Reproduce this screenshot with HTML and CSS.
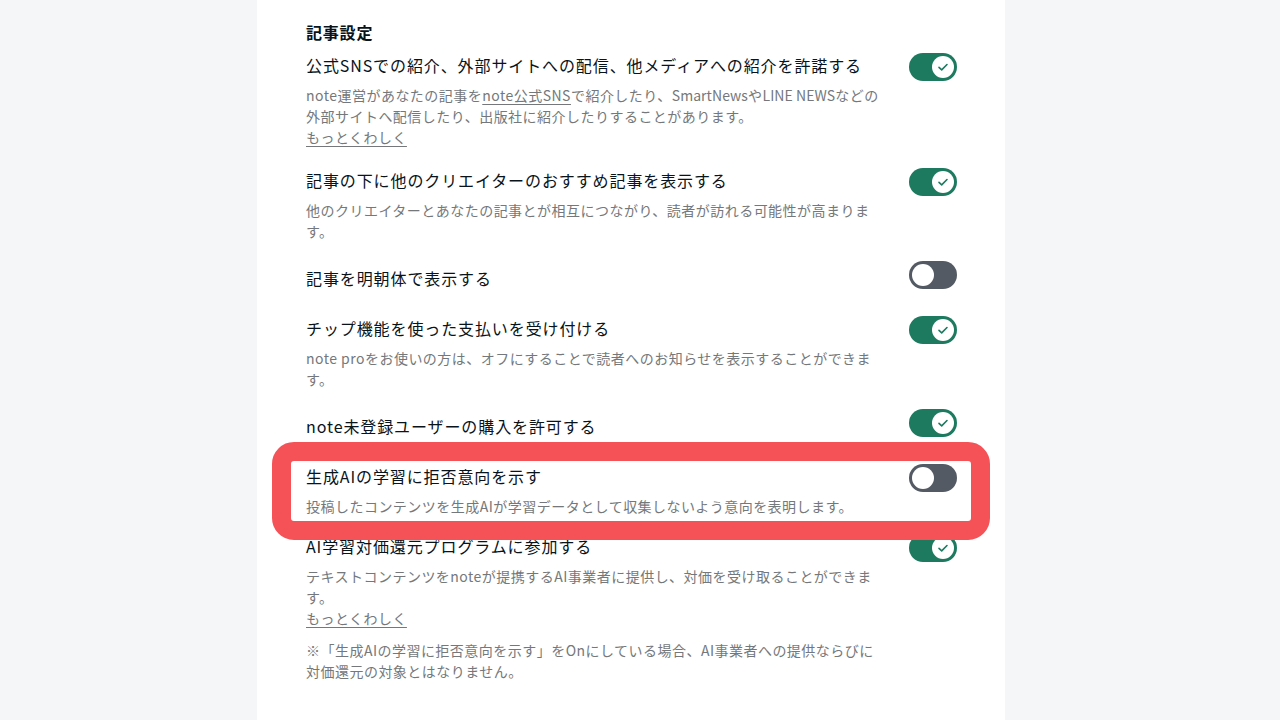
FILE: index.html
```html
<!DOCTYPE html>
<html lang="ja">
<head>
<meta charset="utf-8">
<title>記事設定</title>
<link rel="stylesheet" href="styles.css">
</head>
<body>
<div class="page">
  <section class="panel">
    <h2 class="heading">記事設定</h2>
    <div class="list">
      <div class="row row--link">
        <div class="text">
          <p class="title">公式SNSでの紹介、外部サイトへの配信、他メディアへの紹介を許諾する</p>
          <p class="desc">note運営があなたの記事を<a class="link" href="#">note公式SNS</a>で紹介したり、<span class="latin">SmartNews</span>や<span class="latin">LINE NEWS</span>などの外部サイトへ配信したり、出版社に紹介したりすることがあります。<br><a class="link" href="#">もっとくわしく</a></p>
        </div>
        <span class="toggle on"><span class="knob"><svg viewBox="0 0 22 22" width="22" height="22"><path d="M7 11.3l2.7 2.6 5.3-5.4" fill="none" stroke="#1d7a5f" stroke-width="1.6" stroke-linecap="round" stroke-linejoin="round"/></svg></span></span>
      </div>
      <div class="row">
        <div class="text">
          <p class="title">記事の下に他のクリエイターのおすすめ記事を表示する</p>
          <p class="desc">他のクリエイターとあなたの記事とが相互につながり、読者が訪れる可能性が高まります。</p>
        </div>
        <span class="toggle on"><span class="knob"><svg viewBox="0 0 22 22" width="22" height="22"><path d="M7 11.3l2.7 2.6 5.3-5.4" fill="none" stroke="#1d7a5f" stroke-width="1.6" stroke-linecap="round" stroke-linejoin="round"/></svg></span></span>
      </div>
      <div class="row row--single">
        <div class="text">
          <p class="title">記事を明朝体で表示する</p>
        </div>
        <span class="toggle off"><span class="knob"></span></span>
      </div>
      <div class="row">
        <div class="text">
          <p class="title">チップ機能を使った支払いを受け付ける</p>
          <p class="desc">note proをお使いの方は、オフにすることで読者へのお知らせを表示することができます。</p>
        </div>
        <span class="toggle on"><span class="knob"><svg viewBox="0 0 22 22" width="22" height="22"><path d="M7 11.3l2.7 2.6 5.3-5.4" fill="none" stroke="#1d7a5f" stroke-width="1.6" stroke-linecap="round" stroke-linejoin="round"/></svg></span></span>
      </div>
      <div class="row row--single">
        <div class="text">
          <p class="title">note未登録ユーザーの購入を許可する</p>
        </div>
        <span class="toggle on"><span class="knob"><svg viewBox="0 0 22 22" width="22" height="22"><path d="M7 11.3l2.7 2.6 5.3-5.4" fill="none" stroke="#1d7a5f" stroke-width="1.6" stroke-linecap="round" stroke-linejoin="round"/></svg></span></span>
      </div>
      <div class="row row--marked">
        <div class="text">
          <p class="title">生成AIの学習に拒否意向を示す</p>
          <p class="desc">投稿したコンテンツを生成AIが学習データとして収集しないよう意向を表明します。</p>
        </div>
        <span class="toggle off"><span class="knob"></span></span>
      </div>
      <div class="row">
        <div class="text">
          <p class="title">AI学習対価還元プログラムに参加する</p>
          <p class="desc">テキストコンテンツをnoteが提携するAI事業者に提供し、対価を受け取ることができます。<br><a class="link" href="#">もっとくわしく</a></p>
          <p class="desc note">※「生成AIの学習に拒否意向を示す」をOnにしている場合、AI事業者への提供ならびに対価還元の対象とはなりません。</p>
        </div>
        <span class="toggle on"><span class="knob"><svg viewBox="0 0 22 22" width="22" height="22"><path d="M7 11.3l2.7 2.6 5.3-5.4" fill="none" stroke="#1d7a5f" stroke-width="1.6" stroke-linecap="round" stroke-linejoin="round"/></svg></span></span>
      </div>
    </div>
    <div class="highlight"></div>
  </section>
</div>
</body>
</html>
```

FILE: styles.css
```css
* { box-sizing: border-box; }

html, body {
  margin: 0;
  padding: 0;
  height: 100%;
}

body {
  background: #f5f6f8;
  font-family: "Noto Sans CJK JP", "Noto Sans", sans-serif;
  color: #08131a;
  overflow: hidden;
}

.page {
  height: 100%;
  padding-left: 257px;
}

.panel {
  position: relative;
  width: 748px;
  min-height: 100%;
  background: #ffffff;
  padding: 20px 48px 0 49px;
}

.heading {
  margin: 0 0 7px;
  font-size: 16px;
  line-height: 24px;
  font-weight: 700;
  letter-spacing: 0.05em;
}

.list {
  display: flex;
  flex-direction: column;
  gap: 22px;
}

.row {
  display: flex;
  align-items: flex-start;
}

.row--link { margin-bottom: -4px; }
.row--marked { margin-bottom: -7px; }

.text {
  width: 580px;
  flex: none;
}

.title {
  margin: 0;
  font-size: 16px;
  line-height: 28px;
  letter-spacing: 0.056em;
  color: #08131a;
}

.desc {
  margin: 6px 0 0;
  font-size: 14px;
  line-height: 21px;
  letter-spacing: 0.034em;
  color: #74787b;
}

.desc .latin { letter-spacing: 0.005em; }

.desc.note { margin-top: 11px; }

.link {
  color: #74787b;
  text-decoration: underline;
  text-underline-offset: 3px;
}

.toggle {
  flex: none;
  margin-left: 23px;
  margin-top: 2px;
  width: 48px;
  height: 28px;
  border-radius: 14px;
  display: flex;
  align-items: center;
  padding: 0 3px;
}

.row--single .toggle { margin-top: -3px; }

.toggle.on {
  background: #1d7a5f;
  justify-content: flex-end;
}

.toggle.off {
  background: #545a63;
  justify-content: flex-start;
}

.knob {
  width: 22px;
  height: 22px;
  border-radius: 50%;
  background: #ffffff;
  display: flex;
}

.highlight {
  position: absolute;
  left: 15px;
  top: 442px;
  width: 718px;
  height: 98px;
  border: 19px solid #f55257;
  border-radius: 22px;
  pointer-events: none;
}
```
